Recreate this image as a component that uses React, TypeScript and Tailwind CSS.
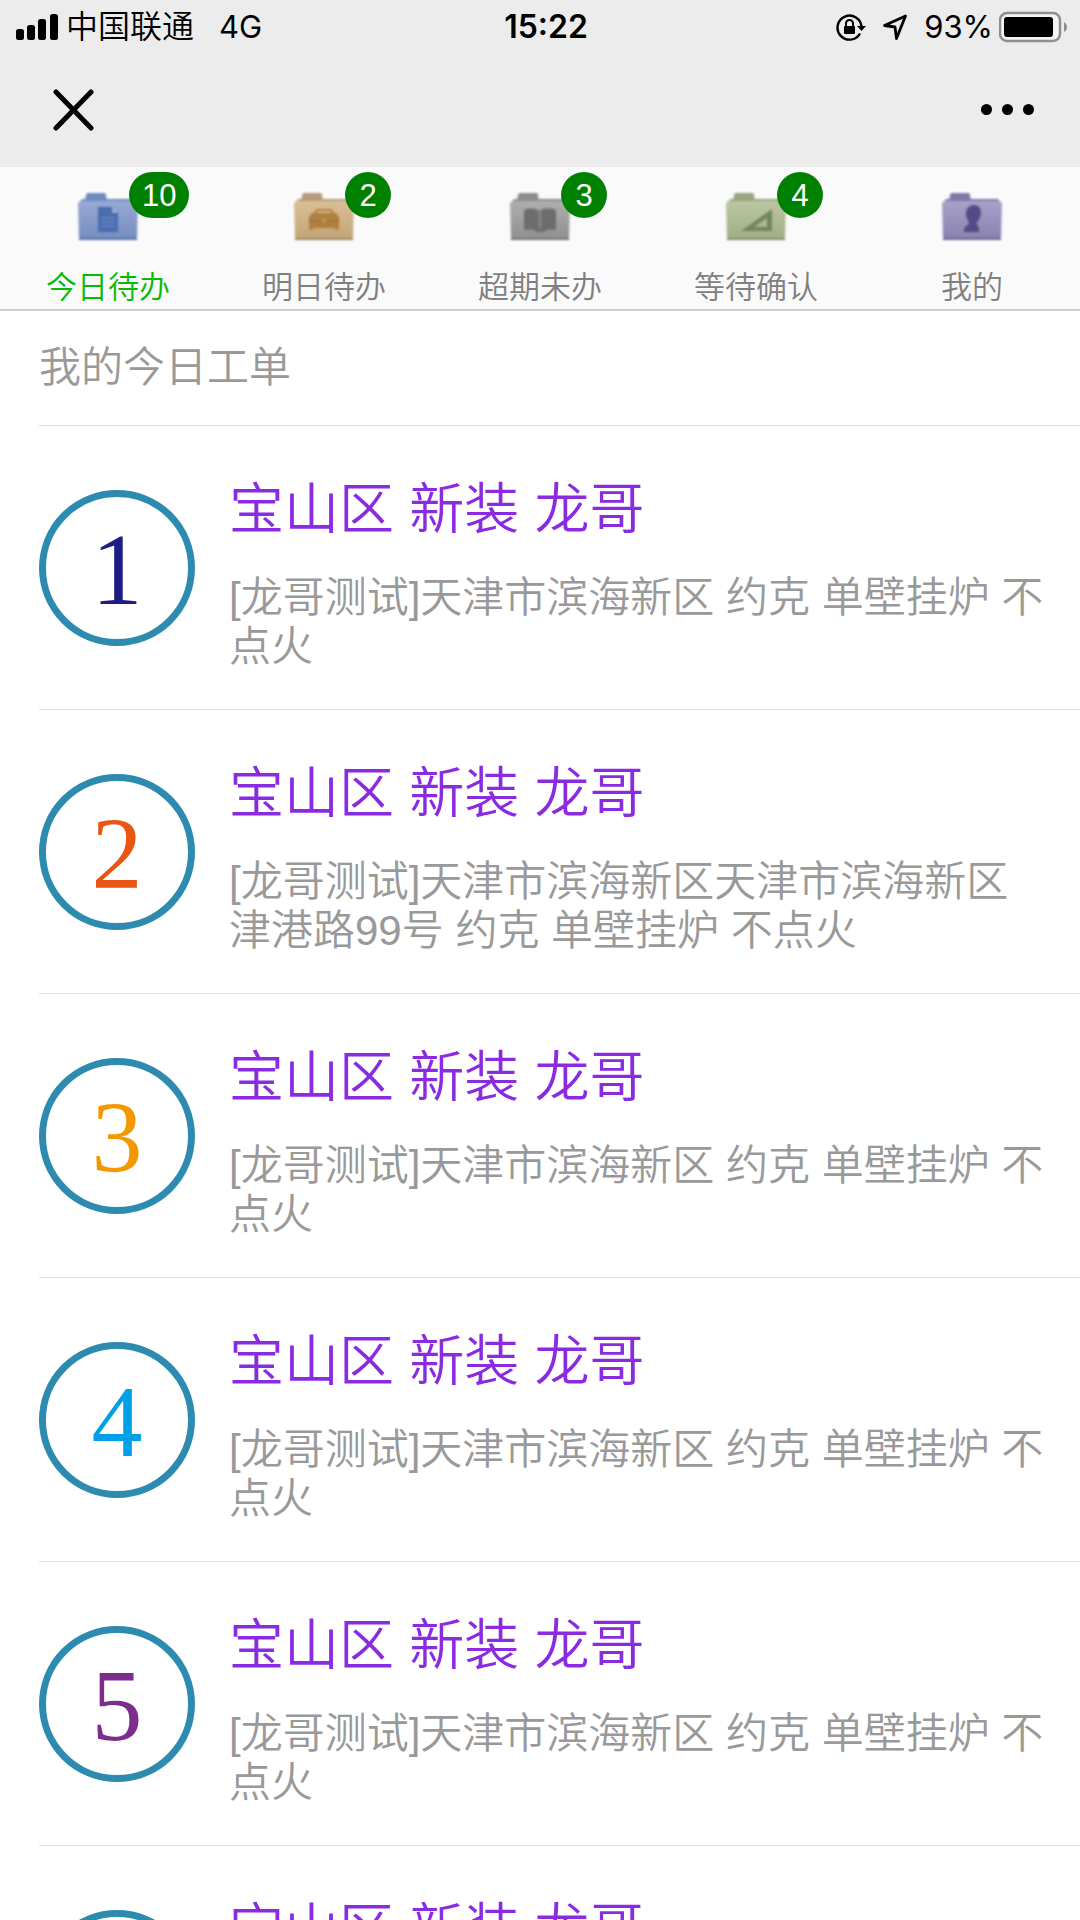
import React, { useState } from 'react';
import clsx from 'clsx';

type FolderKind = 'document' | 'toolbox' | 'book' | 'ruler' | 'person';

interface Tab {
  id: string;
  label: string;
  icon: FolderKind;
  count?: number;
}

interface WorkOrder {
  id: number;
  title: string;
  description: string;
  color: string;
}

const tabs: Tab[] = [
  { id: 'today', label: '今日待办', icon: 'document', count: 10 },
  { id: 'tomorrow', label: '明日待办', icon: 'toolbox', count: 2 },
  { id: 'overdue', label: '超期未办', icon: 'book', count: 3 },
  { id: 'confirm', label: '等待确认', icon: 'ruler', count: 4 },
  { id: 'mine', label: '我的', icon: 'person' },
];

const shortAddress = '[龙哥测试]天津市滨海新区 约克 单壁挂炉 不点火';
const longAddress = '[龙哥测试]天津市滨海新区天津市滨海新区津港路99号 约克 单壁挂炉 不点火';

const orders: WorkOrder[] = [
  { id: 1, title: '宝山区 新装 龙哥', description: shortAddress, color: 'text-[#1d1d85]' },
  { id: 2, title: '宝山区 新装 龙哥', description: longAddress, color: 'text-[#e95513]' },
  { id: 3, title: '宝山区 新装 龙哥', description: shortAddress, color: 'text-[#f39800]' },
  { id: 4, title: '宝山区 新装 龙哥', description: shortAddress, color: 'text-[#00a0e9]' },
  { id: 5, title: '宝山区 新装 龙哥', description: shortAddress, color: 'text-[#7d2d8c]' },
  { id: 6, title: '宝山区 新装 龙哥', description: shortAddress, color: 'text-[#1d1d85]' },
];

const folderColors: Record<FolderKind, { tab: string; top: string; bottom: string; edge: string; glyph: string }> = {
  document: { tab: '#6f8cc0', top: '#9aabd6', bottom: '#748cc0', edge: '#5b74a8', glyph: '#4a6cae' },
  toolbox: { tab: '#b59b7c', top: '#dcc196', bottom: '#c3a378', edge: '#a08763', glyph: '#b0803f' },
  book: { tab: '#8c8c8c', top: '#b0b0b0', bottom: '#8f8f8f', edge: '#757575', glyph: '#6d6d6d' },
  ruler: { tab: '#98a57e', top: '#bdc8a4', bottom: '#a0ae86', edge: '#7f8c68', glyph: '#75855a' },
  person: { tab: '#8079ab', top: '#aaa3cb', bottom: '#8781ae', edge: '#6c6594', glyph: '#544b86' },
};

function FolderGlyph({ kind, color }: { kind: FolderKind; color: string }) {
  switch (kind) {
    case 'document':
      return (
        <g>
          <path d="M21 15h14l6 6v19H21z" fill={color} />
          <path d="M35 15v6h6z" fill="#9dafdb" />
          <path d="M24 26h14M24 30h14M24 34h14" stroke="#6b88c4" strokeWidth="1.5" />
        </g>
      );
    case 'toolbox':
      return (
        <g>
          <path d="M22 22c0-3 2-4 4-4h10c2 0 4 1 4 4" fill="none" stroke={color} strokeWidth="2" />
          <path d="M19 21h24l3 4v13h-4v-2H20v2h-4V25z" fill={color} />
          <path d="M16 29h30" stroke="#a17436" strokeWidth="1.5" />
          <path d="M29 27h4v3h-4z" fill="#c79a59" />
        </g>
      );
    case 'book':
      return (
        <g>
          <path d="M15 18c5-2 11-2 15 1 4-3 10-3 17-1v20c-5-1-9-1-12 2h-7c-3-3-7-3-13-2z" fill={color} />
          <path d="M31 19v17" stroke="#9a9a9a" strokeWidth="1.5" />
        </g>
      );
    case 'ruler':
      return <path d="M47 17v22H16zM42 26L29 35h13z" fill={color} fillRule="evenodd" />;
    case 'person':
      return (
        <path
          d="M33 13c5 0 7 4 7 8 0 4-2 7-4 9v3l2 3v4H23v-3c1-3 5-4 5-7-2-2-3-5-3-9s3-8 8-8z"
          fill={color}
        />
      );
  }
}

function FolderIcon({ kind }: { kind: FolderKind }) {
  const c = folderColors[kind];

  return (
    <svg viewBox="0 0 62 50" className="h-[50px] w-[62px] blur-[1px]" aria-hidden="true">
      <defs>
        <linearGradient id={`folder-${kind}`} x1="0" y1="0" x2="0" y2="1">
          <stop offset="0" stopColor={c.top} />
          <stop offset="1" stopColor={c.bottom} />
        </linearGradient>
      </defs>
      <path d="M8 9l1-6c0-1 1-2 2-2h16c2 0 2 1 2 2l1 6z" fill={c.tab} />
      <path d="M5 7h52l4 4-1 36c0 1 0 1-1 1H3c-1 0-1 0-1-1L1 11z" fill={`url(#folder-${kind})`} />
      <path d="M5 8h52" stroke={c.tab} strokeWidth="2" />
      <path d="M2 47h58" stroke={c.edge} strokeWidth="2" />
      <FolderGlyph kind={kind} color={c.glyph} />
    </svg>
  );
}

function StatusBar() {
  return (
    <div className="grid h-[54px] grid-cols-[1fr_auto_1fr] items-center pr-1 pl-4 font-['Inter','Noto_Sans_CJK_SC',sans-serif] text-[31px] leading-[36px] text-black">
      <div className="flex items-center">
        <svg viewBox="0 0 42 28" className="mr-2 h-[28px] w-[42px]" aria-hidden="true">
          <rect x="0" y="16" width="8" height="11" rx="2.5" />
          <rect x="11" y="12" width="8" height="15" rx="2.5" />
          <rect x="22" y="6" width="8" height="21" rx="2.5" />
          <rect x="34" y="1" width="8" height="26" rx="2.5" />
        </svg>
        <span className="text-[32px] leading-[38px] font-[350]">中国联通</span>
        <span className="ml-[25px]">4G</span>
      </div>
      <time className="text-[32px] font-semibold">15:22</time>
      <div className="flex items-center justify-end pr-[7px]">
        <svg viewBox="0 0 30 28" className="h-[28px] w-[30px]" aria-hidden="true">
          <path d="M24 20.5A12 12 0 1 1 25.5 14" fill="none" stroke="#000" strokeWidth="2.4" />
          <path d="M21 13h9l-4.5 5z" />
          <path d="M10 14v-3.5a3.5 3.5 0 0 1 7 0V14" fill="none" stroke="#000" strokeWidth="2" />
          <rect x="8" y="13" width="11" height="8" rx="1" />
        </svg>
        <svg viewBox="0 0 26 28" className="ml-4 h-[28px] w-[26px]" aria-hidden="true">
          <path
            d="M23.5 3L2.5 12.5l10.5 1.5 1.5 11.5z"
            fill="none"
            stroke="#000"
            strokeWidth="2.8"
            strokeLinejoin="round"
          />
        </svg>
        <span className="ml-4">93%</span>
        <svg viewBox="0 0 70 32" className="ml-[6px] h-[32px] w-[70px]" aria-hidden="true">
          <rect x="1" y="2" width="60" height="28" rx="7" fill="#f4f4f4" stroke="#8e8e8e" strokeWidth="2.5" />
          <rect x="5" y="6" width="49" height="20" rx="3" />
          <path d="M65 11c4 2 4 8 0 10z" fill="#8e8e8e" />
        </svg>
      </div>
    </div>
  );
}

function NavBar() {
  return (
    <div className="flex h-[113px] items-center justify-between pr-[46px] pb-[2px] pl-[53px]">
      <button type="button" aria-label="关闭">
        <svg viewBox="0 0 42 42" className="size-[42px]">
          <path d="M3 3l35 36M38 3L3 39" stroke="#000" strokeWidth="5" strokeLinecap="round" />
        </svg>
      </button>
      <button type="button" aria-label="更多" className="flex gap-[10px]">
        <span className="size-[11px] rounded-full bg-black" />
        <span className="size-[11px] rounded-full bg-black" />
        <span className="size-[11px] rounded-full bg-black" />
      </button>
    </div>
  );
}

export default function App() {
  const [activeTab, setActiveTab] = useState('today');

  return (
    <div className="min-h-screen bg-white font-['Liberation_Sans','Noto_Sans_CJK_SC',sans-serif]">
      <header className="bg-[#ececec]">
        <StatusBar />
        <NavBar />
      </header>

      <nav className="grid grid-cols-5 border-b-2 border-[#cdcdcd] bg-[#fafafa]">
        {tabs.map((tab) => (
          <button
            key={tab.id}
            type="button"
            onClick={() => setActiveTab(tab.id)}
            className={clsx(
              'flex h-[142px] flex-col items-center justify-between pt-[25px] text-[31px] leading-[42px] font-[350]',
              activeTab === tab.id ? 'text-[#09bb07]' : 'text-[#808080]'
            )}
          >
            <span className="relative">
              <FolderIcon kind={tab.icon} />
              {tab.count && (
                <span className="absolute -top-5 left-[52px] h-[46px] min-w-[46px] rounded-full bg-[#008000] px-[13px] text-center leading-[48px] font-normal text-white">
                  {tab.count}
                </span>
              )}
            </span>
            <span>{tab.label}</span>
          </button>
        ))}
      </nav>

      <main className="pl-[39px]">
        <h1 className="border-b border-[#dcdcdc] py-[27px] text-[42px] leading-[60px] font-[350] text-[#999999]">
          我的今日工单
        </h1>
        <ul>
          {orders.map((order) => (
            <li key={order.id} className="border-b border-[#e2e2e2]">
              <a href={`#order-${order.id}`} className="flex items-center gap-[34px] pt-[39px] pr-8 pb-[38px]">
                <span
                  className={clsx(
                    "flex size-[156px] shrink-0 items-center justify-center rounded-full border-[7px] border-[#2e8bb0] pt-1 font-['Liberation_Serif',serif] text-[102px] leading-none",
                    order.color
                  )}
                >
                  {order.id}
                </span>
                <span className="min-w-0 flex-1 pt-[6px]">
                  <span className="block text-[55px] leading-[77px] font-[350] text-[#8a2be2]">{order.title}</span>
                  <span className="mt-[25px] block text-[42px] leading-[49px] font-[350] text-[#999999]">
                    {order.description}
                  </span>
                </span>
              </a>
            </li>
          ))}
        </ul>
      </main>
    </div>
  );
}
